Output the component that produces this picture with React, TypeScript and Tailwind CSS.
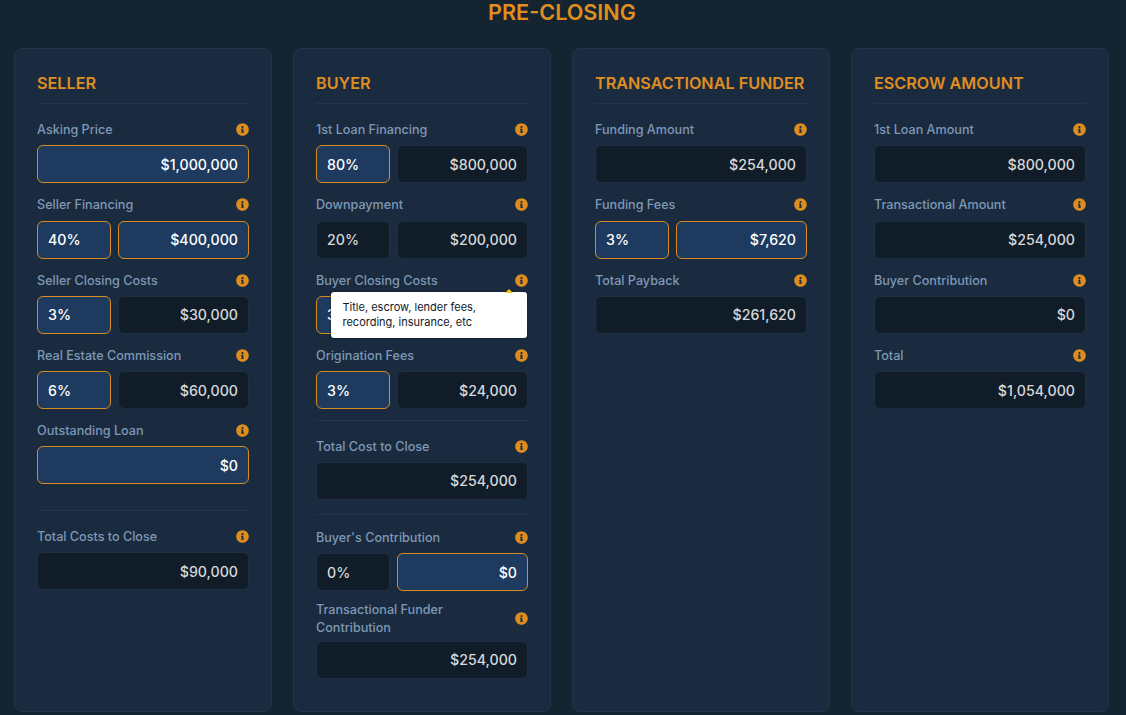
import React from "react";
import { FaInfoCircle } from "react-icons/fa";

type Part = { value: string; active?: boolean };
type FieldProps = {
  label: string;
  parts: Part[];
  className?: string;
  labelClass?: string;
  children?: React.ReactNode;
};

function Field({ label, parts, className, labelClass, children }: FieldProps) {
  return (
    <div className={`relative ${className ?? "mb-[12px]"}`}>
      <div className={`flex items-center justify-between text-[12.6px] leading-[18.25px] font-medium text-[#7f98b5] ${labelClass ?? "mb-[6px]"}`}>
        <span className="max-w-[170px] pt-[1px]">{label}</span>
        <FaInfoCircle size={13} className="text-[#dc8d1e] shrink-0" />
      </div>
      <div className="flex gap-[7px]">
        {parts.map((part, i) => {
          const isPercent = part.value.endsWith("%");
          return (
            <input
              key={i}
              readOnly
              value={part.value}
              className={`h-[38px] min-w-0 rounded-[6px] border px-[10px] text-[14.2px] font-medium outline-none ${
                isPercent ? "w-[74px] shrink-0 text-left" : "flex-1 text-right"
              } ${
                part.active
                  ? "bg-[#1e3a5f] border-[#d88c1f] text-white"
                  : "bg-[#101c28] border-[#1f2f43] text-[#d6d8db]"
              }`}
            />
          );
        })}
      </div>
      {children}
    </div>
  );
}

function Card({ title, children }: { title: string; children: React.ReactNode }) {
  return (
    <section className="rounded-[8px] border border-[#22344a] bg-[#1a2b40] px-[22px] pt-[22px] pb-[32px]">
      <h2 className="mb-[16px] border-b border-[#23354b] pb-[8px] text-[16.2px] leading-[24px] font-semibold text-[#e08e1f]">{title}</h2>
      {children}
    </section>
  );
}

function Divider({ className }: { className: string }) {
  return <div className={`h-px bg-[#23354b] ${className}`} />;
}

export default function App() {
  return (
    <div className="min-h-[715px] bg-[#142430] pl-[14px] pr-[17px] font-['Inter',sans-serif]">
      <h1 className="h-[48px] pl-[1px] text-center text-[21.6px] leading-[24px] font-semibold text-[#e08e1f]">PRE-CLOSING</h1>
      <div className="grid grid-cols-4 gap-[21px]">
        <Card title="SELLER">
          <Field label="Asking Price" parts={[{ value: "$1,000,000", active: true }]} />
          <Field label="Seller Financing" parts={[{ value: "40%", active: true }, { value: "$400,000", active: true }]} />
          <Field label="Seller Closing Costs" parts={[{ value: "3%", active: true }, { value: "$30,000" }]} />
          <Field label="Real Estate Commission" parts={[{ value: "6%", active: true }, { value: "$60,000" }]} />
          <Field label="Outstanding Loan" parts={[{ value: "$0", active: true }]} />
          <Divider className="mt-[26px] mb-[15.5px]" />
          <Field label="Total Costs to Close" parts={[{ value: "$90,000" }]} />
        </Card>

        <Card title="BUYER">
          <Field label="1st Loan Financing" parts={[{ value: "80%", active: true }, { value: "$800,000" }]} />
          <Field label="Downpayment" parts={[{ value: "20%" }, { value: "$200,000" }]} />
          <Field label="Buyer Closing Costs" parts={[{ value: "3%", active: true }, { value: "$30,000" }]}>
            <div className="absolute left-[15px] top-[21px] z-10 h-[46px] w-[196px] rounded-[3px] bg-white px-[11.5px] py-[8px] text-[11px] leading-[15px] text-[#111827] shadow-[0_0_2px_#0b1420]">
              <span className="absolute right-[14px] -top-[3px] h-0 w-0 border-x-[4px] border-b-[4px] border-x-transparent border-b-[#f5c518]" />
              Title, escrow, lender fees,
              <br />
              recording, insurance, etc
            </div>
          </Field>
          <Field label="Origination Fees" parts={[{ value: "3%", active: true }, { value: "$24,000" }]} />
          <Divider className="-mt-px mb-[15.5px]" />
          <Field label="Total Cost to Close" parts={[{ value: "$254,000" }]} />
          <Divider className="mt-[14.5px] mb-[12.5px]" />
          <Field label="Buyer's Contribution" parts={[{ value: "0%" }, { value: "$0", active: true }]} />
          <Field
            label="Transactional Funder Contribution"
            parts={[{ value: "$254,000" }]}
            className="-mt-[3px]"
            labelClass="mb-[3px]"
          />
        </Card>

        <Card title="TRANSACTIONAL FUNDER">
          <Field label="Funding Amount" parts={[{ value: "$254,000" }]} />
          <Field label="Funding Fees" parts={[{ value: "3%", active: true }, { value: "$7,620", active: true }]} />
          <Field label="Total Payback" parts={[{ value: "$261,620" }]} />
        </Card>

        <Card title="ESCROW AMOUNT">
          <Field label="1st Loan Amount" parts={[{ value: "$800,000" }]} />
          <Field label="Transactional Amount" parts={[{ value: "$254,000" }]} />
          <Field label="Buyer Contribution" parts={[{ value: "$0" }]} />
          <Field label="Total" parts={[{ value: "$1,054,000" }]} />
        </Card>
      </div>
    </div>
  );
}
